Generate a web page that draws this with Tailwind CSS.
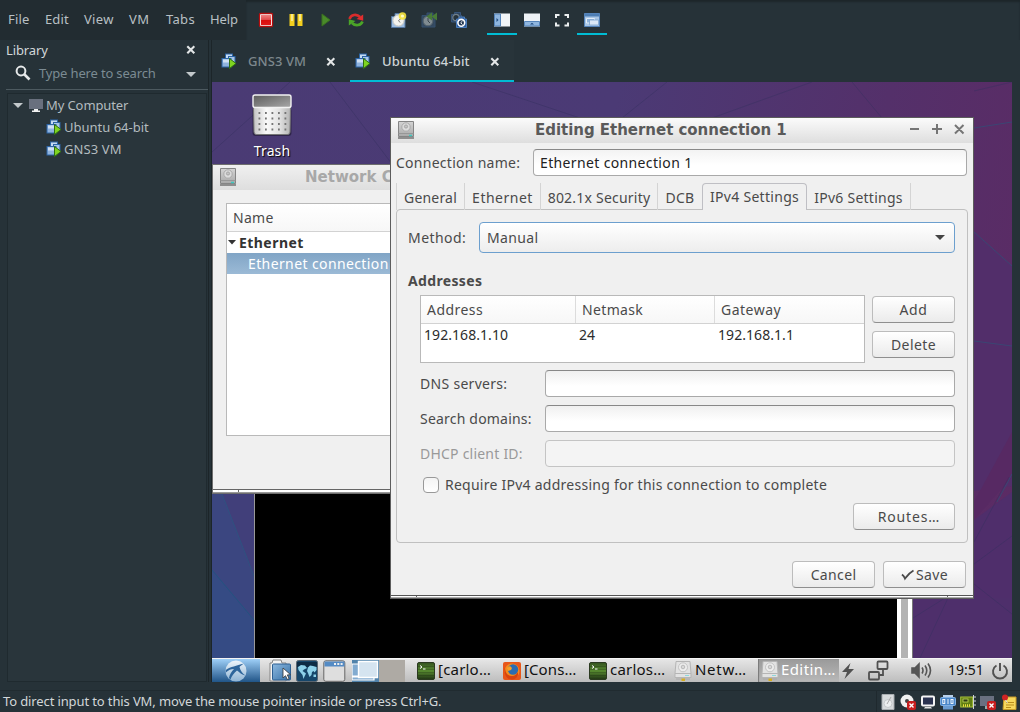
<!DOCTYPE html>
<html lang="en">
<head>
<meta charset="utf-8">
<title>Ubuntu 64-bit - VMware Workstation</title>
<script src="https://cdn.jsdelivr.net/npm/@tailwindcss/browser@4"></script>
</head>
<body class="w-[1020px] h-[712px] overflow-hidden bg-[#263238] font-['Noto_Sans','Open_Sans',sans-serif] whitespace-nowrap">
<!-- shared icons -->
<svg class="absolute h-0 w-0">
  <defs>
    <linearGradient id="gRed" x1="0" y1="0" x2="0" y2="1"><stop offset="0" stop-color="#f08080"/><stop offset=".48" stop-color="#e04a4a"/><stop offset=".5" stop-color="#d80c0c"/><stop offset="1" stop-color="#e01818"/></linearGradient>
    <linearGradient id="gSteel" x1="0" y1="0" x2="1" y2="1"><stop offset="0" stop-color="#8db9e0"/><stop offset="1" stop-color="#356fa5"/></linearGradient>
    <linearGradient id="gBird" x1="0" y1="0" x2="0" y2="1"><stop offset="0" stop-color="#eef5fb"/><stop offset="1" stop-color="#8fb4d4"/></linearGradient>
    <linearGradient id="gBin" x1="0" y1="0" x2="1" y2="0"><stop offset="0" stop-color="#c4c4c4"/><stop offset=".35" stop-color="#fafafa"/><stop offset=".7" stop-color="#e2e2e2"/><stop offset="1" stop-color="#b4b4b4"/></linearGradient>
    <linearGradient id="gLid" x1="0" y1="0" x2="1" y2="1"><stop offset="0" stop-color="#5c5c5c"/><stop offset="1" stop-color="#a8a8a8"/></linearGradient>
    <linearGradient id="gTerm" x1="0" y1="0" x2="0" y2="1"><stop offset="0" stop-color="#345220"/><stop offset=".5" stop-color="#578a30"/><stop offset="1" stop-color="#1f3214"/></linearGradient>
    <linearGradient id="gDisk" x1="0" y1="0" x2="0" y2="1"><stop offset="0" stop-color="#d4d4d4"/><stop offset="1" stop-color="#a9a9a9"/></linearGradient>
  </defs>
  <symbol id="vm" viewBox="0 0 16 16">
    <rect x="4.5" y="1" width="7" height="6" fill="#c6dbf2" stroke="#2c65a6"/>
    <rect x="7.500" y="3.500" width="6.500" height="7" fill="#a8c6e8" stroke="#2c65a6"/>
    <rect x="1" y="5.500" width="9" height="8.500" fill="#8fb3de" stroke="#2c65a6"/>
    <path d="M2 6.500h7v3H2z" fill="#cfe0f4"/>
    <path d="M8.500 5.500l6.500 5-6.500 5z" fill="#7ed321" stroke="#2f6e12"/>
  </symbol>
  <symbol id="close" viewBox="0 0 10 10"><path d="M1.300 1.300l7 7M8.300 1.300l-7 7" stroke="#e3e6e7" stroke-width="2.100"/></symbol>
  <symbol id="disk" viewBox="0 0 18 20">
    <path d="M1.500 1.500h15v15h-15z" fill="url(#gDisk)" stroke="#858585"/>
    <path d="M1.500 13.500h15" stroke="#979797"/>
    <circle cx="9" cy="7" r="4.200" fill="#dcdcdc" stroke="#aaa"/><circle cx="9" cy="6.500" r="1.600" fill="#c4c4c4" stroke="#9c9c9c" stroke-width=".8"/>
    <path d="M12 15.500h3" stroke="#3cc8c0" stroke-width="1.500"/>
    <path d="M1 18h16" stroke="#6a6a6a" stroke-width="1.400"/>
  </symbol>
  <symbol id="drive" viewBox="0 0 18 20">
    <path d="M2 .5h14l1 12v4H1v-4z" fill="#e2e2e2" stroke="#b5b5b5"/>
    <path d="M1 12.500h16" stroke="#b5b5b5"/>
    <circle cx="9" cy="6.300" r="4.500" fill="#ededed" stroke="#c4c4c4"/><circle cx="9" cy="6" r="1.800" fill="#d8d8d8" stroke="#b9b9b9"/>
    <path d="M2 18h14" stroke="#aaa"/><path d="M7.500 17.500h3.500v2.500H7.500z" fill="#d6ae20"/>
    <path d="M11 14.500h4" stroke="#8fd8dc"/>
  </symbol>
  <symbol id="term" viewBox="0 0 18 18">
    <rect x=".5" y=".5" width="17" height="17" rx="1.500" fill="url(#gTerm)" stroke="#2b3a20"/>
    <path d="M1 4.500h16M1 7.500h16M1 10.500h16M1 13.500h16" stroke="#000" stroke-opacity=".18"/>
    <path d="M3 3.500l2 1.500-2 1.500M6 7h2.500" fill="none" stroke="#fff"/>
  </symbol>
</svg>

<div class="flex h-[712px] w-[1020px] flex-col text-[13px] text-[#c6cccf]">
  <!-- menu bar and toolbar -->
  <header class="flex h-10">
    <nav class="flex h-10 w-[246px] items-center bg-[#222c31] pl-2 text-[#b9c0c4]">
      <span class="w-[37px] tracking-[.2px]">File</span><span class="w-[39px] tracking-[.1px]">Edit</span><span class="w-[45px] tracking-[.3px]">View</span><span class="w-[37px] tracking-[.5px]">VM</span><span class="w-11 tracking-[.3px]">Tabs</span><span class="tracking-[-.08px]">Help</span>
    </nav>
    <div class="flex flex-1 pl-[5px] shadow-[inset_0_2px_2px_#1d262a]">
      <div class="flex">
        <span class="grid h-10 w-[30px] place-items-center"><svg class="h-4 w-4" viewBox="0 0 16 16"><rect x="1.500" y="1.500" width="13" height="13" rx="1" fill="#fff" stroke="#b40d0d" stroke-width="1.300"/><rect x="3" y="3" width="10" height="10" fill="url(#gRed)"/></svg></span>
        <span class="grid h-10 w-[30px] place-items-center"><svg class="h-4 w-4" viewBox="0 0 16 16"><path d="M1.500 2h5v12h-5zM9.500 2h5v12h-5z" fill="#f3cf1f"/><path d="M3 2h2v7H3zM11 2h2v7h-2z" fill="#fae88a"/></svg></span>
        <span class="grid h-10 w-[30px] place-items-center"><svg class="h-4 w-4" viewBox="0 0 16 16"><path d="M4 2l8 6-8 6z" fill="#4a8a2a" stroke="#38701f"/></svg></span>
        <span class="grid h-10 w-[30px] place-items-center"><svg class="h-4 w-4" viewBox="0 0 16 16" fill="none"><path d="M1.500 7C3 2.500 8.500 1.500 12 5" stroke="#d92c2c" stroke-width="2.600"/><path d="M15.200 2.500v6.300L8.500 7z" fill="#e02e2e"/><path d="M14.500 9.500C13 13.500 7.500 14.500 4 11" stroke="#4ba528" stroke-width="2.600"/><path d="M.8 13.500V7.200L7.500 9z" fill="#4ba528"/></svg></span>
      </div>
      <div class="ml-[13px] flex">
        <span class="grid h-10 w-[30px] place-items-center"><svg class="h-4 w-4" viewBox="0 0 16 16"><path d="M.5 4.500h3.500v-3h7v3h3v11H.5z" fill="#9dbde2" stroke="#54779f"/><circle cx="7.500" cy="8.500" r="5.600" fill="#f3f3ee" stroke="#c4c4bd"/><path d="M7.500 8.500l2.500-2M7.500 8.500l1.500 2" stroke="#777"/><circle cx="11.500" cy="4" r="3.800" fill="#f5e23a" opacity=".9"/><circle cx="11.500" cy="4" r="1.600" fill="#fffbc4"/></svg></span>
        <span class="grid h-10 w-[30px] place-items-center"><svg class="h-4 w-4" viewBox="0 0 16 16"><path d="M1 3.500h5V1h6v3h2v11H1z" fill="#34495f" stroke="#34506f"/><circle cx="7" cy="9" r="4.800" fill="#7f8b91" stroke="#56646c"/><path d="M7 9V6M7 9l2 2" stroke="#3a474e"/><path d="M11 .5v8L5.500 4.500zM16 .5v8l-5.500-4z" fill="#487a37"/></svg></span>
        <span class="grid h-10 w-[30px] place-items-center"><svg class="h-4 w-4" viewBox="0 0 16 16"><path d="M.5 2.500h3V.5h6v3h1V10H.5z" fill="#2c4460" stroke="#38567c"/><circle cx="5" cy="5.500" r="3.200" fill="#26333c" stroke="#717f89" stroke-width="1.200"/><path d="M8 5h5.500v2h2v8.500H5.500V7H8z" fill="#2b5c9e" stroke="#4b7dbb"/><circle cx="10.300" cy="10.800" r="3.400" fill="#1f3450" stroke="#fff" stroke-width="1.600"/><path d="M11.500 9l-1.800 1.800 1.800 1.800" fill="none" stroke="#fff"/></svg></span>
      </div>
      <div class="ml-[13px] flex">
        <span class="grid h-[35px] w-[30px] place-items-center border-b-2 border-[#00bcd4] pt-1.5"><svg class="h-4 w-4" viewBox="0 0 16 16"><path d="M0 1.500h16v13H0z" fill="#f2f5f8"/><path d="M.5 2h6v12h-6z" fill="#8fb6df" stroke="#5584ba"/><path d="M2.500 6L4.500 8l-2 2z" fill="#1f4b80"/></svg></span>
        <span class="grid h-10 w-[30px] place-items-center"><svg class="h-4 w-4" viewBox="0 0 16 16"><path d="M0 1.500h16v13H0z" fill="#eef2f6"/><path d="M.5 9.500h15V14H.500z" fill="#8fb6df" stroke="#5584ba"/><path d="M6 12.500L8 10.700l2 1.800z" fill="#1f4b80"/></svg></span>
        <span class="grid h-10 w-[30px] place-items-center"><svg class="h-4 w-4" viewBox="0 0 16 16"><path d="M2 6V3h3.500M10.500 3H14v3M14 10.500v3h-3.500M5.500 13.500H2v-3" fill="none" stroke="#eceff0" stroke-width="2"/></svg></span>
        <span class="grid h-[35px] w-[30px] place-items-center border-b-2 border-[#00bcd4] pt-1.5"><svg class="h-4 w-4" viewBox="0 0 16 16"><path d="M.5 1.500h15v13H.5z" fill="#a9c6e6" stroke="#5584ba"/><path d="M1 2h14v2.500H1z" fill="#4d7eb5"/><path d="M2.500 6.500h8V11h-8z" fill="#8fb3da" stroke="#e3edf8"/><path d="M5.500 8h9v5h-9z" fill="#dbe8f6" stroke="#7ba3cf" stroke-width=".8"/></svg></span>
      </div>
    </div>
  </header>

  <main class="flex h-[650px]">
    <!-- library -->
    <aside class="flex w-[208px] flex-col pl-1.5">
      <div class="flex h-5 items-center text-[#d3d8da]"><span class="pt-0.5 tracking-[-.1px]">Library</span><svg class="ml-auto mr-3 h-2.5 w-2.5"><use href="#close"/></svg></div>
      <div class="flex h-[26px] items-center">
        <svg class="ml-[9px] h-4 w-4" viewBox="0 0 16 16" fill="none" stroke="#e6e9ea"><circle cx="6" cy="6" r="4.400" stroke-width="2"/><path d="M9 9l5.500 5.500" stroke-width="2.600"/></svg>
        <span class="ml-2 pt-0.5 tracking-[-.16px] text-[#7b8b93]">Type here to search</span>
        <svg class="ml-auto mr-3 mt-0.5 h-[5px] w-2.5" viewBox="0 0 10 5"><path d="M0 0h10L5 5z" fill="#c3c9cc"/></svg>
      </div>
      <div class="mt-[3px] h-px w-[202px] bg-[#4d5a60]"></div>
      <div class="ml-px mt-[3px] h-[589px] w-[200px] border border-[#1f2a2f] bg-[#29353b] text-[#b3bbbf]">
        <div class="flex h-[22px] items-center"><svg class="ml-[5px] h-[5px] w-2.5" viewBox="0 0 10 5"><path d="M0 0h10L5 5z" fill="#c3c9cc"/></svg><svg class="ml-[5px] h-4 w-4" viewBox="0 0 16 16"><path d="M1 2h14v10H1z" fill="#69707e"/><path d="M6 12h4v1.500h2V15H4v-1.500h2z" fill="#f2f2f2"/></svg><span class="ml-[2px] pt-0.5 tracking-[-.1px]">My Computer</span></div>
        <div class="flex h-[22px] items-center pl-[38px]"><svg class="h-4 w-4"><use href="#vm"/></svg><span class="ml-[2px] pt-0.5">Ubuntu 64-bit</span></div>
        <div class="flex h-[22px] items-center pl-[38px]"><svg class="h-4 w-4"><use href="#vm"/></svg><span class="ml-[2px] pt-0.5 tracking-[.1px]">GNS3 VM</span></div>
      </div>
    </aside>
    <div class="h-[642px] w-1 border-x border-[#1c2529]"></div>

    <section class="w-[808px]">
      <!-- machine tabs -->
      <div class="flex h-[42px] font-medium">
        <div class="flex w-[138px] items-center pl-[9px] text-[#7d888d]"><svg class="h-4 w-4"><use href="#vm"/></svg><span class="ml-[11px] pt-0.5 tracking-[.1px]">GNS3 VM</span><svg class="ml-auto mr-3.5 mt-px h-2.5 w-2.5"><use href="#close"/></svg></div>
        <div class="flex w-[164px] items-center border-b-2 border-[#00bcd4] bg-[#28343a] pl-[5px] pt-0.5 text-[#cdd3d6]"><svg class="h-4 w-4"><use href="#vm"/></svg><span class="ml-[11px] pt-0.5 tracking-[.12px]">Ubuntu 64-bit</span><svg class="ml-auto mr-3.5 mt-px h-2.5 w-2.5"><use href="#close"/></svg></div>
      </div>

      <!-- guest desktop -->
      <div class="relative h-[600px] w-[800px] overflow-hidden bg-[linear-gradient(100deg,#4a3b74_0%,#4b3a75_45%,#54306a_75%,#5c2a63_100%)]">
        <svg class="absolute inset-0 h-[600px] w-[800px]" viewBox="0 0 800 600" fill="none" stroke="#36305f" stroke-opacity=".45">
          <path d="M0 412h42v164H0z" fill="#3b4680" stroke="none"/><path d="M10 412h32v82z" fill="#413f7a" stroke="none"/>
          <path d="M0 488l42 50v40H0z" fill="#354b84" stroke="none"/><path d="M10 412l32 82" stroke="#2f5280" stroke-opacity="1"/><path d="M0 488l42 50" stroke="#245380" stroke-opacity="1"/>
          <path d="M762 150l38 34v220l-38 5z" fill="#522e6a" stroke="none"/><path d="M762 420l38-70v45l-38 43z" fill="#572963" stroke="none"/><path d="M762 438l38-28v170h-38z" fill="#4f2e6b" stroke="none"/>
          <path d="M700 516h100v60H700z" fill="#4e2f6b" stroke="none"/>
          <path d="M762 9l38-9M0 70L78 0M118 0l62 82M260 0l120 40M455 0l-50 40" />
          <path d="M762 46l38-6M762 150l38 34M762 259l38 5M785 420l15-28" stroke="#3b4673" stroke-opacity="1"/>
          <path d="M762 460l35-65M762 482l38-28M762 502l38 30M736 516l-28 60M701 536l32-20M500 36l100-36M640 0l30 36"/>
        </svg>

        <!-- trash -->
        <div class="absolute left-[35px] top-2.5 flex w-[50px] flex-col items-center">
          <svg class="h-[46px] w-[42px]" viewBox="0 0 42 46">
            <rect x="1.500" y="16" width="39" height="28" rx="3" fill="#000" opacity=".35"/>
            <path d="M2.500 15h37l-.5 25q0 2.500-2.500 2.500h-31Q3 42.500 3 40z" fill="url(#gBin)" stroke="#777"/>
            <rect x="2" y="3" width="38" height="12.500" rx="2" fill="url(#gLid)" stroke="#f2f2f2" stroke-width="1.400"/>
            <g stroke="#757575" stroke-width="1.800" stroke-dasharray="1.800 4.700"><path d="M7.500 21h28M7.500 26.500h28M7.500 32h28M7.500 37.500h28"/></g>
          </svg>
          <span class="mt-[3px] text-[14px] leading-5 tracking-[.1px] text-white [text-shadow:1px_1px_1px_#000]">Trash</span>
        </div>

        <!-- terminal behind the dialogs -->
        <div class="absolute left-[42px] top-[400px] flex h-[176px] w-[659px] border-l border-[#999] bg-black">
          <div class="ml-auto flex w-4 border-r border-[#777] bg-white px-1"><div class="w-[7px] bg-[#b3b3b3]"></div></div>
        </div>

        <!-- Network Connections window, its right part runs under the dialog -->
        <div class="absolute left-0 top-[82px] h-[330px] w-[178px] overflow-hidden border border-r-0 border-[#6e6e6e] bg-[#f0f0f0] text-[14px] text-[#4a4a4a]">
          <div class="flex h-[25px] bg-linear-to-b from-[#f0f0f0] to-[#dedede]">
            <svg class="ml-[6px] mt-[2px] h-5 w-[18px] shrink-0"><use href="#disk"/></svg>
            <span class="ml-[68px] font-['DejaVu_Sans'] text-[15px] font-bold leading-6 text-[#a8a8a8]">Network C</span>
          </div>
          <div class="ml-[13px] mt-[13px] h-[233px] border border-r-0 border-[#b9b9b9] bg-white">
            <div class="flex h-7 items-center border-b border-[#d2d2d2] bg-linear-to-b from-white to-[#f7f7f7] pl-1.5 tracking-[.3px]">Name</div>
            <div class="flex h-[21px] items-center text-[#333]"><svg class="ml-px h-[5px] w-[8px]" viewBox="0 0 8 5"><path d="M0 0h8L4 4.500z" fill="#333"/></svg><b class="ml-[3px] tracking-[.45px]">Ethernet</b></div>
            <div class="flex h-[21px] items-center bg-linear-to-b from-[#81a5c6] to-[#9bbad6] pl-[21px] tracking-[.39px] text-white">Ethernet connection</div>
          </div>
          <div class="mt-[53px] flex h-[4px] border-y border-t-[#666] border-b-[#999] bg-white"><div class="w-[26px] border-r border-[#666]"></div></div>
        </div>

        <!-- Editing dialog -->
        <div class="absolute left-[178px] top-[35px] h-[482px] w-[584px] border border-[#5c5c5c] bg-[#f0f0f0] text-[14px] text-[#4a4a4a]">
          <div class="flex h-[25px] items-start bg-linear-to-b from-[#fbfbfb] to-[#dedede]">
            <svg class="ml-[6px] mt-[2px] h-5 w-[18px]"><use href="#disk"/></svg>
            <span class="ml-[120px] font-['DejaVu_Sans'] text-[15px] font-bold leading-6 tracking-[-.03px] text-[#5a5a5a]">Editing Ethernet connection 1</span>
            <svg class="ml-auto mr-[7px] mt-1 h-3.5 w-14" viewBox="0 0 56 14" fill="none" stroke="#757575" stroke-width="2"><path d="M0 7h9M22 7h10M27 2v10M45 3l8.500 8.500M53.500 3L45 11.500"/></svg>
          </div>
          <div class="mt-1.5 flex h-[27px] items-center pl-[5px]">
            <span class="w-[137px] tracking-[.27px]">Connection name:</span>
            <div class="flex h-[27px] w-[434px] items-center rounded border border-[#a9a9a9] border-t-[#888] bg-linear-to-b from-[#f3f3f3] to-white to-60% pl-1.5 tracking-[.36px] text-[#222]">Ethernet connection 1</div>
          </div>
          <div class="relative z-10 ml-[5px] mt-[7px] flex h-[27px]">
            <div class="flex w-[68px] items-center justify-center border-l border-[#d4d4d4] pt-px tracking-[.2px]">General</div>
            <div class="flex w-[76px] items-center justify-center border-l border-[#d4d4d4] pt-px tracking-[.5px]">Ethernet</div>
            <div class="flex w-[117px] items-center justify-center border-l border-[#d4d4d4] pt-px tracking-[.22px]">802.1x Security</div>
            <div class="flex w-[45px] items-center justify-center border-l border-[#d4d4d4] pt-px tracking-[.3px]">DCB</div>
            <div class="flex w-[105px] items-center justify-center rounded-t border border-b-0 border-[#bfbfc4] bg-[#f0f0f0] pb-px tracking-[.3px]">IPv4 Settings</div>
            <div class="flex w-[104px] items-center justify-center border-r border-[#d4d4d4] pt-px tracking-[.25px]">IPv6 Settings</div>
          </div>
          <div class="ml-[5px] -mt-px h-[334px] w-[572px] rounded-sm border border-[#c0c0c0] pt-3">
            <div class="flex h-[31px] items-center pl-[11px]">
              <span class="w-[71px] tracking-[.45px]">Method:</span>
              <div class="flex h-[31px] w-[476px] items-center rounded border border-[#6c9fce] bg-linear-to-b from-white to-[#ededed] pl-[7px] tracking-[.35px]">Manual<svg class="ml-auto mr-[9px] h-[5px] w-2.5" viewBox="0 0 10 5"><path d="M0 0h10L5 5z" fill="#444"/></svg></div>
            </div>
            <div class="mt-[17px] flex h-5 items-center pl-[11px] font-bold tracking-[.35px]">Addresses</div>
            <div class="mt-[5px] flex pl-[23px]">
              <div class="h-[68px] w-[445px] border border-[#b9b9b9] bg-white">
                <div class="flex h-7 border-b border-[#d2d2d2] bg-linear-to-b from-white to-[#f7f7f7]">
                  <span class="flex w-[155px] items-center border-r border-[#dcdcdc] pl-1.5 tracking-[.45px]">Address</span>
                  <span class="flex w-[139px] items-center border-r border-[#dcdcdc] pl-1.5 tracking-[.35px]">Netmask</span>
                  <span class="flex items-center pl-1.5 tracking-[.5px]">Gateway</span>
                </div>
                <div class="flex h-5 items-center pl-[3px] text-[#2c2c2c]"><span class="w-[155px] tracking-[.06px]">192.168.1.10</span><span class="w-[139px]">24</span><span class="tracking-[.06px]">192.168.1.1</span></div>
              </div>
              <div class="ml-[7px] flex flex-col gap-2 pt-px">
                <button class="h-[27px] w-[83px] rounded border border-[#bcbcbc] border-b-[#8f8f8f] bg-linear-to-b from-white to-[#ebebeb] tracking-[.6px]">Add</button>
                <button class="h-[27px] w-[83px] rounded border border-[#bcbcbc] border-b-[#8f8f8f] bg-linear-to-b from-white to-[#ebebeb] tracking-[.4px]">Delete</button>
              </div>
            </div>
            <div class="mt-[7px] flex flex-col gap-2 pl-[23px]">
              <div class="flex items-center"><span class="w-[125px] tracking-[.3px]">DNS servers:</span><div class="h-[27px] w-[410px] rounded border border-[#a9a9a9] border-t-[#888] bg-linear-to-b from-[#f0f0f0] to-white to-60%"></div></div>
              <div class="flex items-center"><span class="w-[125px] tracking-[.2px]">Search domains:</span><div class="h-[27px] w-[410px] rounded border border-[#a9a9a9] border-t-[#888] bg-linear-to-b from-[#f0f0f0] to-white to-60%"></div></div>
              <div class="flex items-center"><span class="w-[125px] tracking-[.22px] text-[#999]">DHCP client ID:</span><div class="h-[27px] w-[410px] rounded border border-[#c4c4c4] bg-[#f4f4f4]"></div></div>
            </div>
            <div class="mt-2 flex h-5 items-center pl-[26px]"><span class="h-4 w-4 rounded border border-[#999] bg-linear-to-b from-[#f4f4f4] to-white"></span><span class="ml-1.5 pb-0.5 tracking-[.25px]">Require IPv4 addressing for this connection to complete</span></div>
            <button class="ml-[456px] mt-2 block h-[27px] w-[102px] rounded border border-[#bcbcbc] border-b-[#8f8f8f] bg-linear-to-b from-white to-[#ebebeb] pl-2.5 tracking-[.85px]">Routes…</button>
          </div>
          <div class="mr-[7px] mt-[18px] flex justify-end gap-2">
            <button class="h-[27px] w-[83px] rounded border border-[#bcbcbc] border-b-[#8f8f8f] bg-linear-to-b from-white to-[#ebebeb] tracking-[.35px]">Cancel</button>
            <button class="flex h-[27px] w-[83px] items-center justify-center rounded border border-[#bcbcbc] border-b-[#8f8f8f] bg-linear-to-b from-white to-[#ebebeb] tracking-[.4px]"><svg class="mr-0.5 h-3 w-[13px]" viewBox="0 0 13 12"><path d="M1 5.500q2 1.500 3 4Q8 4 12.500 1.500" fill="none" stroke="#4a4a4a" stroke-width="1.900"/></svg>Save</button>
          </div>
          <div class="mt-[7px] flex h-[3px] border-y border-t-[#555] border-b-[#aaa] bg-white"><div class="w-[26px] border-r border-[#666]"></div><div class="ml-auto w-[26px] border-l border-[#666]"></div></div>
        </div>

        <!-- guest panel -->
        <div class="absolute bottom-0 left-0 flex h-6 w-[800px] items-center border-t border-[#f4f4f4] bg-linear-to-b from-[#e6e6e6] to-[#bdbdbd] text-[15px] text-[#111]">
          <div class="grid h-6 w-12 place-items-center bg-linear-to-b from-[#9fd0f8] to-[#1a5083]"><svg class="h-[22px] w-[22px]" viewBox="0 0 22 22"><circle cx="11" cy="11" r="10.500" fill="url(#gBird)"/><path d="M.8 10C6 6.500 11 6 19 3.500c-2 1.500-4 2.500-4.500 3.500 1 4 3 6.500 6 8.500C17 15 14 12 12 10.500 9 13 6.500 16 5.500 19.500L4 18c.5-3.500 2.500-6.500 5-9C6 9 3.500 10 .8 12.500z" fill="#2e659b"/></svg></div>
          <svg class="ml-[9px] h-[23px] w-[23px]" viewBox="0 0 23 23"><path d="M1 4h2l1-3h8l1 3h4v18H1z" fill="#f3f3f3" stroke="#858585"/><rect x="3.500" y="5" width="18" height="16" rx="1" fill="url(#gSteel)" stroke="#2c5f92"/><path d="M14 9v10l2.500-2.300 1.800 3.800 1.800-.9-1.800-3.700 3.200-.2z" fill="#fff" stroke="#333" stroke-width=".8"/></svg>
          <svg class="ml-1 h-[22px] w-[22px]" viewBox="0 0 22 22"><rect x=".5" y=".5" width="21" height="21" rx="2" fill="#16466a" stroke="#5b6670"/><path d="M1 2h20v5H1z" fill="#0e2c45"/><path d="M2 7l3-2 4 .5L11 8l-3 1.500L6.500 11 8 12l2 1.500-1.500 3L7.500 19l-1-4-2-2.500L2.500 10zM12 7.500l2-2 3 .5 3.500 1v3l-2 2.500-1-1.500-1.500 1-.5 3-2 2-1.500-4-1-2zM17.500 14.500h2.500v2.500h-2.500z" fill="#8ed2ea"/></svg>
          <svg class="ml-[5px] h-[22px] w-[23px]" viewBox="0 0 23 22"><rect x=".8" y=".8" width="21" height="20.500" rx="2" fill="#dedede" stroke="#666"/><path d="M1.500 1.500h20v5h-20z" fill="#548bc4"/><path d="M11 4h9" stroke="#eee" stroke-width="2" stroke-dasharray="2 1.300"/></svg>
          <div class="ml-1.5 flex h-[22px] w-[53px]"><svg class="h-[22px] w-[27px]" viewBox="0 0 27 22"><path d="M0 0h27v22H0z" fill="#5183ab"/><path d="M0 4h8v12H0zM0 17h22v3H0z" fill="#82abd0" stroke="#fff" stroke-width="1.200"/><path d="M6.500 1.500h19v16h-19z" fill="#d5e4f0" stroke="#fff" stroke-width="1.400"/></svg><div class="h-[22px] w-[26px] bg-[#aeaaa4]"></div></div>
          <div class="ml-[9px] flex items-center">
            <div class="flex w-[86px] items-center pl-[3px]"><svg class="h-[18px] w-[18px]"><use href="#term"/></svg><span class="ml-[3px] pb-0.5 tracking-[.2px]">[carlo…</span></div>
            <div class="flex w-[86px] items-center pl-[3px]"><svg class="h-[18px] w-[18px]" viewBox="0 0 18 18"><rect width="18" height="18" rx="2" fill="#e8571a"/><circle cx="9" cy="9" r="7.500" fill="#f28c1e"/><circle cx="10" cy="7.500" r="5.200" fill="#2c6cb0"/><path d="M2 5c0 6 3 9 7 9 3 0 5-2 5.500-4 2 4-2 7.500-6 7.500S0 13 2 5z" fill="#d8430f"/><path d="M4 6l3-2 2 2-1 2-3 1z" fill="#f7a024"/></svg><span class="ml-[3px] pb-0.5 tracking-[.1px]">[Cons…</span></div>
            <div class="flex w-[86px] items-center pl-[3px]"><svg class="h-[18px] w-[18px]"><use href="#term"/></svg><span class="ml-[3px] pb-0.5 tracking-[.2px]">carlos…</span></div>
            <div class="flex w-[86px] items-center pl-0.5"><svg class="h-5 w-[18px]"><use href="#drive"/></svg><span class="ml-[3px] pb-0.5 tracking-[.7px]">Netw…</span></div>
            <div class="flex h-[23px] w-[81px] items-center bg-linear-to-b from-[#9a9a9a] to-[#b8b8b8] pl-[3px] text-white shadow-[inset_1px_0_1px_#777]"><svg class="h-5 w-[18px]"><use href="#drive"/></svg><span class="ml-[2px] pb-0.5 tracking-[.4px]">Editin…</span></div>
          </div>
          <svg class="ml-[3px] h-4 w-3" viewBox="0 0 12 16"><path d="M8.500 0L0 9h5l-2.500 7L12 6H6.500z" fill="#505050"/></svg>
          <svg class="ml-3.5 h-[21px] w-[21px]" viewBox="0 0 21 21" fill="none" stroke="#505050" stroke-width="1.800"><rect x="9.500" y="1.500" width="10" height="7.500" rx="1"/><rect x="1" y="12" width="10" height="7.500" rx="1"/><path d="M15 9v6h-4"/></svg>
          <svg class="ml-[22px] h-[17px] w-[22px]" viewBox="0 0 22 17" fill="none" stroke="#555" stroke-width="1.600"><path d="M1 6h3l4-4v13l-4-4H1z" fill="#555"/><path d="M11 5.500q2 3 0 6M14 3.500q3.500 5 0 10M17 1.500q5 7 0 14"/></svg>
          <span class="ml-[15px] pb-0.5 text-[14px]">19:51</span>
          <svg class="ml-auto mr-[3px] h-[18px] w-[18px]" viewBox="0 0 18 18" fill="none" stroke="#505050" stroke-width="1.900"><path d="M5.500 3.500a7 7 0 1 0 7 0M9 1v8"/></svg>
        </div>
      </div>
    </section>
  </main>

  <!-- status bar -->
  <footer class="flex h-[22px] items-center border-t border-[#202b30] pl-[3px]">
    <span class="tracking-[-.12px] text-[#d2d7d9]">To direct input to this VM, move the mouse pointer inside or press Ctrl+G.</span>
    <div class="ml-auto mr-[3px] flex h-[21px] items-center gap-1 border-l border-[#1f292e] pl-[3px]">
      <svg class="h-4 w-4" viewBox="0 0 16 16"><path d="M2 .5h12v15H2z" fill="#d7dadc" stroke="#a8adb0"/><circle cx="8" cy="9.500" r="4" fill="#eceeef" stroke="#c4c8ca"/><path d="M11 3l-4 7" stroke="#aaa"/></svg>
      <svg class="h-4 w-4" viewBox="0 0 16 16"><circle cx="7" cy="7" r="6.500" fill="#f0f0f0"/><circle cx="7" cy="7" r="2" fill="#444"/><rect x="7" y="7" width="9" height="9" rx="2" fill="#c81e1e"/><path d="M9.500 9.500l4 4M13.500 9.500l-4 4" stroke="#fff" stroke-width="1.400"/></svg>
      <svg class="h-4 w-4" viewBox="0 0 16 16"><rect x="2" y="2.500" width="12" height="9" rx="1" fill="#2b3350" stroke="#f4f4f4" stroke-width="2"/><path d="M5 13h6l1 1.500H4z" fill="#e2e2e2"/></svg>
      <svg class="h-4 w-4" viewBox="0 0 16 16"><path d="M3 1h10v3H3z" fill="#b9d0ea"/><rect x=".5" y="3.500" width="15" height="8" rx="1" fill="#4a86c8" stroke="#82b0e2"/><g fill="none" stroke="#fff" stroke-width=".9"><rect x="2.800" y="5.500" width="2" height="4"/><path d="M8 5v5"/><rect x="11" y="5.500" width="2" height="4"/></g><path d="M3 12h10v3.500H3z" fill="#6a9bd0"/></svg>
      <svg class="h-4 w-4" viewBox="0 0 16 16"><rect x=".7" y="3" width="12" height="10" fill="#5f7d12" stroke="#a9c23a"/><rect x="3" y="5" width="5" height="3" fill="#2a3a10" stroke="#c9dc60" stroke-width=".8"/><path d="M3 11.500h8" stroke="#f0e040" stroke-width="2.500" stroke-dasharray="1 1"/><path d="M13.500 1v14M13 3h3M13 7h3M13 11h3" stroke="#cfd4d6"/></svg>
      <svg class="h-4 w-4" viewBox="0 0 16 16"><path d="M0 2h14v10H0z" fill="#6a7080"/><path d="M5 12h4v3H5z" fill="#9aa"/><rect x="7" y="7" width="9" height="9" rx="2" fill="#c81e1e"/><path d="M9.500 9.500l4 4M13.500 9.500l-4 4" stroke="#fff" stroke-width="1.400"/></svg>
      <svg class="ml-px h-4 w-4" viewBox="0 0 16 16"><path d="M3 3h12v12.500H2z" fill="#f6d75c" stroke="#c69a26"/><path d="M5 8.500h8M5 11h8M5 13.500h5" stroke="#b98d1c"/><circle cx="4" cy="3.500" r="3" fill="#d02424"/><path d="M4.500 6l2 3" stroke="#ddd"/></svg>
    </div>
  </footer>
</div>
</body>
</html>
